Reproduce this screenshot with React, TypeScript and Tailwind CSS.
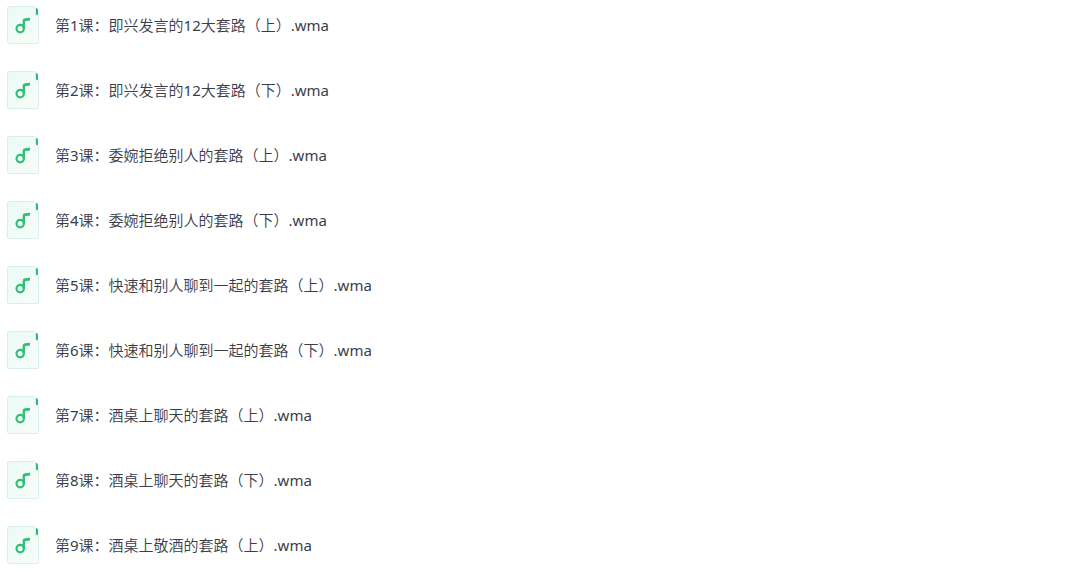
const lessons = [
  "第1课：即兴发言的12大套路（上）.wma",
  "第2课：即兴发言的12大套路（下）.wma",
  "第3课：委婉拒绝别人的套路（上）.wma",
  "第4课：委婉拒绝别人的套路（下）.wma",
  "第5课：快速和别人聊到一起的套路（上）.wma",
  "第6课：快速和别人聊到一起的套路（下）.wma",
  "第7课：酒桌上聊天的套路（上）.wma",
  "第8课：酒桌上聊天的套路（下）.wma",
  "第9课：酒桌上敬酒的套路（上）.wma",
];

const AudioIcon = () => (
  <svg width="32" height="38" viewBox="0 0 32 38" fill="none" aria-hidden="true" className="shrink-0">
    <defs>
      <linearGradient id="page" x1="0" y1="0" x2="1" y2="1">
        <stop offset="0" stopColor="#ebfaf4" />
        <stop offset="1" stopColor="#f8fdfa" />
      </linearGradient>
    </defs>
    <path
      d="M2 0.5H27Q28.5 0.5 28.5 2V8Q28.5 9.5 30 9.5H31.5V36Q31.5 37.5 30 37.5H2Q0.5 37.5 0.5 36V2Q0.5 0.5 2 0.5Z"
      fill="url(#page)"
      stroke="#d8f0e5"
    />
    <path d="M29 2H29.5Q31 2.5 31 4V9H30Q29 9 29 8Z" fill="#2abb72" />
    <circle cx="13.2" cy="22.6" r="3.7" stroke="#2fc077" strokeWidth="2.2" />
    <path d="M15.6 22.5V15Q15.6 12.6 18 12.3L23 11.8V14.5L19 15Q18 15.2 18 16V22.5Z" fill="#2fc077" />
  </svg>
);

const App = () => {
  return (
    <main className="bg-white pl-[7px] font-['Noto_Sans','Noto_Sans_CJK_SC_DemiLight','Noto_Sans_CJK_SC',sans-serif] text-[15px] text-[#3b3d4a]">
      <ul>
        {lessons.map((name) => (
          <li key={name} className="flex h-[65px] items-start gap-4 pt-[6px]">
            <AudioIcon />
            <span className="leading-[38px]">{name}</span>
          </li>
        ))}
      </ul>
    </main>
  );
};

export default App;
